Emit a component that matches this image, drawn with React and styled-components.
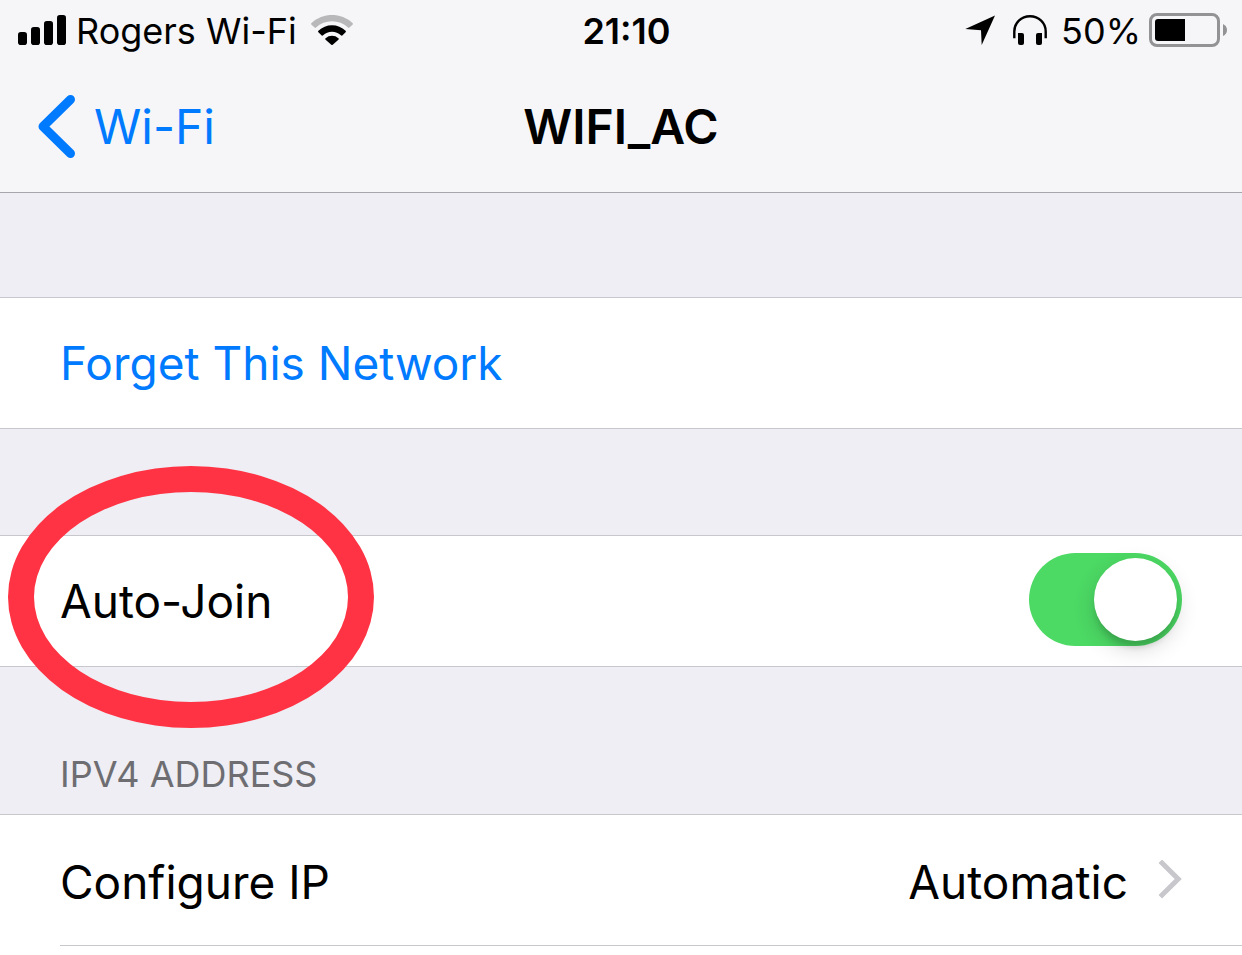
import React, { useState } from "react";
import styled, { createGlobalStyle } from "styled-components";

const GlobalStyle = createGlobalStyle`
  *, *::before, *::after { box-sizing: border-box; }
  html { background: #fff; }
  body {
    margin: 0;
    color: #000;
    font-family: Inter, "Liberation Sans", sans-serif;
    overflow-x: hidden;
  }
`;

const Page = styled.div`
  display: flex;
  flex-direction: column;
  min-height: 100vh;
  background: #efeef4;
`;

const Header = styled.header`
  background: #f6f6f8;
  border-bottom: 1px solid #a7a7ab;
`;

const StatusBar = styled.div`
  display: grid;
  grid-template-columns: 1fr auto 1fr;
  align-items: center;
  height: 62px;
  padding: 0 15px 0 18px;
  font-size: 36px;
  line-height: 44px;
`;

const StatusGroup = styled.div`
  display: flex;
  align-items: center;
  justify-content: ${(p) => (p.$end ? "flex-end" : "flex-start")};
  gap: ${(p) => p.$gap}px;
  white-space: nowrap;
`;

const Clock = styled.time`
  padding-left: 8px;
  font-weight: 600;
`;

const Icon = styled.svg`
  display: block;
  flex: none;
`;

const StatusIcon = styled(Icon)`
  margin-bottom: 2px;
`;

const NavBar = styled.nav`
  display: grid;
  grid-template-columns: 1fr auto 1fr;
  align-items: center;
  height: 130px;
  padding: 0 38px;
  font-size: 48px;
  line-height: 60px;
`;

const BackLink = styled.a`
  display: flex;
  align-items: center;
  justify-self: start;
  gap: 18px;
  color: #007aff;
  text-decoration: none;
`;

const Title = styled.h1`
  margin: 0;
  font-size: 48px;
  font-weight: 600;
`;

const Main = styled.main`
  display: flex;
  flex: 1;
  flex-direction: column;
`;

const Group = styled.section`
  margin-top: ${(p) => p.$space}px;
  background: #fff;
  border-top: 1px solid #c8c7cc;
  border-bottom: ${(p) => (p.$open ? "none" : "1px solid #c8c7cc")};
  flex: ${(p) => (p.$open ? "1" : "none")};
`;

const Row = styled.div`
  position: relative;
  display: flex;
  align-items: center;
  justify-content: space-between;
  min-height: 130px;
  padding: 0 60px;
  font-size: 46px;
  line-height: 60px;
`;

const ActionButton = styled.button`
  display: block;
  width: 100%;
  min-height: 130px;
  padding: 0 60px;
  border: 0;
  background: none;
  color: #007aff;
  font: inherit;
  font-size: 46px;
  line-height: 60px;
  text-align: left;
  cursor: pointer;
`;

const DetailLink = styled.a`
  display: flex;
  align-items: center;
  justify-content: space-between;
  min-height: 131px;
  margin-left: 60px;
  padding-right: 60px;
  border-bottom: 1px solid #c8c7cc;
  color: inherit;
  font-size: 46px;
  line-height: 60px;
  text-decoration: none;
`;

const DetailText = styled.span`
  padding-top: 3px;
`;

const Detail = styled.span`
  display: flex;
  align-items: center;
  gap: 30px;
`;

const Toggle = styled.input`
  appearance: none;
  width: 153px;
  height: 93px;
  margin: 0 0 3px;
  padding: 5px;
  border-radius: 47px;
  background: ${(p) => (p.checked ? "#4cd964" : "#e5e5ea")};
  cursor: pointer;

  &::before {
    content: "";
    display: block;
    width: 83px;
    height: 83px;
    margin-left: ${(p) => (p.checked ? "60px" : "0")};
    border-radius: 50%;
    background: #fff;
    box-shadow: 0 8px 22px rgba(0, 0, 0, 0.16), 0 8px 6px -2px rgba(0, 0, 0, 0.14);
  }
`;

const Ring = styled.span`
  position: absolute;
  top: -70px;
  left: 8px;
  width: 366px;
  height: 262px;
  border: 26px solid #ff3343;
  border-radius: 50%;
  pointer-events: none;
`;

const GroupTitle = styled.h2`
  margin: 0;
  padding: 85px 60px 18px;
  color: #6d6d72;
  font-size: 36px;
  font-weight: 400;
  line-height: 44px;
`;

const SignalIcon = () => (
  <StatusIcon width="48" height="30" viewBox="0 0 48 30" aria-hidden="true">
    <rect x="0" y="17" width="9" height="13" rx="2.8" />
    <rect x="13" y="12" width="9" height="18" rx="2.8" />
    <rect x="26" y="6" width="9" height="24" rx="2.8" />
    <rect x="39" y="0" width="9" height="30" rx="2.8" />
  </StatusIcon>
);

const WifiIcon = () => (
  <StatusIcon width="42" height="30" viewBox="0 0 42 30" aria-hidden="true">
    <path
      fill="#b8b8ba"
      d="M.5 8Q-.4 8.8 .5 9.7L3.6 12.6Q4.3 13.2 5 12.5A23.5 23.5 0 0 1 37 12.5Q37.7 13.2 38.4 12.6L41.5 9.7Q42.4 8.8 41.5 8A30 30 0 0 0 .5 8Z"
    />
    <path d="M7.4 15.8Q6.6 16.6 7.4 17.3L10.7 20.4Q11.4 21 12.1 20.3A13 13 0 0 1 29.9 20.3Q30.6 21 31.3 20.4L34.6 17.3Q35.4 16.6 34.6 15.8A19.5 19.5 0 0 0 7.4 15.8Z" />
    <path d="M14.6 23.3A9.6 9.6 0 0 1 27.4 23.3Q28.2 24 27.4 24.7L21.7 29.8Q21 30.3 20.3 29.8L14.6 24.7Q13.8 24 14.6 23.3Z" />
  </StatusIcon>
);

const LocationIcon = () => (
  <StatusIcon width="30" height="30" viewBox="0 0 30 30" aria-hidden="true">
    <path d="M30 0.5L16.7 30L16 15.2L.3 14Z" />
  </StatusIcon>
);

const HeadphonesIcon = () => (
  <StatusIcon width="34" height="30" viewBox="0 0 34 30" aria-hidden="true">
    <path
      d="M1.3 23.2V16.5C1.3 8 8.2 1.3 17 1.3S32.7 8 32.7 16.5V23.2"
      fill="none"
      stroke="#000"
      strokeWidth="2.4"
    />
    <path d="M5 18H9Q11 18 11 20V28Q11 30 9 30H7Q5 30 5 28Z" />
    <path d="M29 18H25Q23 18 23 20V28Q23 30 25 30H27Q29 30 29 28Z" />
  </StatusIcon>
);

const BatteryIcon = () => (
  <StatusIcon width="78" height="34" viewBox="0 0 78 34" aria-hidden="true">
    <rect x="1.5" y="1.5" width="68" height="31" rx="6.5" fill="none" stroke="#939395" strokeWidth="3" />
    <path d="M36 6H9Q6 6 6 9V25Q6 28 9 28H36Z" />
    <path fill="#939395" d="M74 11Q78 13 78 17T74 23Z" />
  </StatusIcon>
);

const BackIcon = () => (
  <Icon width="38" height="64" viewBox="0 0 38 64" aria-hidden="true">
    <path
      d="M32.5 4.5L5 31.5L32.5 58.5"
      fill="none"
      stroke="#007aff"
      strokeWidth="9"
      strokeLinecap="round"
      strokeLinejoin="round"
    />
  </Icon>
);

const ChevronIcon = () => (
  <Icon width="24" height="40" viewBox="0 0 24 40" aria-hidden="true">
    <path d="M2.3 1.3L20.2 19L2.3 36.7" fill="none" stroke="#c7c7cc" strokeWidth="5" />
  </Icon>
);

export default function App() {
  const [autoJoin, setAutoJoin] = useState(true);

  return (
    <Page>
      <GlobalStyle />
      <Header>
        <StatusBar>
          <StatusGroup $gap={10}>
            <SignalIcon />
            <StatusGroup $gap={14}>
              <span>Rogers Wi-Fi</span>
              <WifiIcon />
            </StatusGroup>
          </StatusGroup>
          <Clock>21:10</Clock>
          <StatusGroup $gap={14} $end>
            <StatusGroup $gap={18}>
              <LocationIcon />
              <HeadphonesIcon />
            </StatusGroup>
            <StatusGroup $gap={8}>
              <span>50%</span>
              <BatteryIcon />
            </StatusGroup>
          </StatusGroup>
        </StatusBar>
        <NavBar>
          <BackLink href="#wifi">
            <BackIcon />
            <span>Wi-Fi</span>
          </BackLink>
          <Title>WIFI_AC</Title>
        </NavBar>
      </Header>
      <Main>
        <Group $space={104}>
          <ActionButton type="button">Forget This Network</ActionButton>
        </Group>
        <Group $space={106}>
          <Row>
            <label htmlFor="auto-join">Auto-Join</label>
            <Toggle
              id="auto-join"
              type="checkbox"
              role="switch"
              checked={autoJoin}
              onChange={(e) => setAutoJoin(e.target.checked)}
            />
            <Ring aria-hidden="true" />
          </Row>
        </Group>
        <GroupTitle>IPV4 ADDRESS</GroupTitle>
        <Group $space={0} $open>
          <DetailLink href="#configure-ip">
            <DetailText>Configure IP</DetailText>
            <Detail>
              <DetailText>Automatic</DetailText>
              <ChevronIcon />
            </Detail>
          </DetailLink>
        </Group>
      </Main>
    </Page>
  );
}
